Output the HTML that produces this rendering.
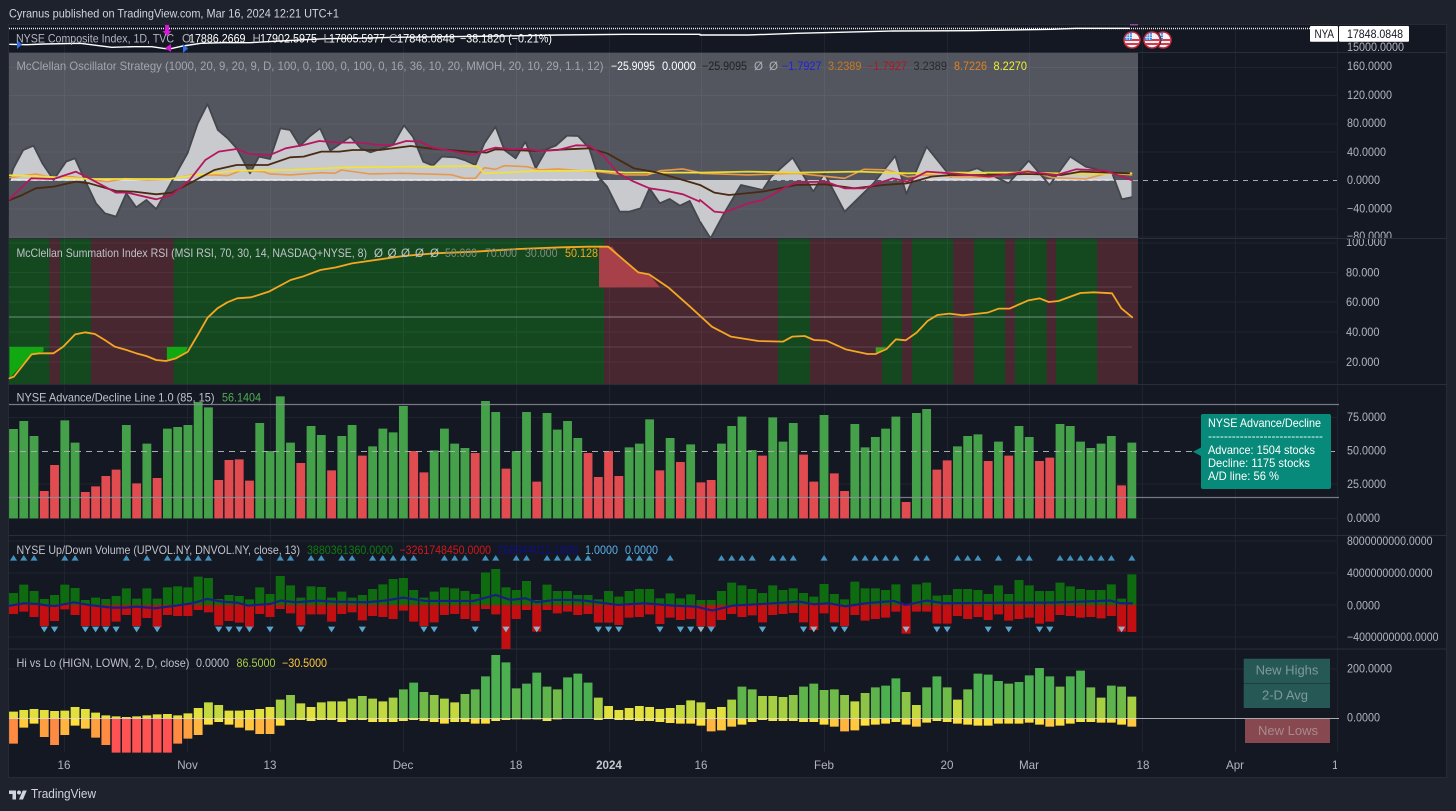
<!DOCTYPE html>
<html><head><meta charset="utf-8"><title>NYSE breadth chart</title>
<style>
html,body{margin:0;padding:0;background:#1e222d}
svg{display:block}
text{font-family:"Liberation Sans",sans-serif;font-size:11.6px;fill:#b2b5be}
.n{vector-effect:non-scaling-stroke;fill:none;stroke-linejoin:round;stroke-linecap:round}
.f{fill:none}
</style></head><body>
<svg width="1456" height="811" viewBox="0 0 1456 811" xmlns="http://www.w3.org/2000/svg">
<defs><clipPath id="fc"><circle r="7.3"/></clipPath>
<clipPath id="ax"><rect x="9" y="25" width="1328" height="753"/></clipPath>
<clipPath id="a1"><rect x="1340" y="53" width="106" height="185"/></clipPath>
<clipPath id="a2"><rect x="1340" y="239" width="106" height="145"/></clipPath>
<g id="flag"><circle r="9.4" fill="#131722"/><circle r="8.8" fill="#c22a3c"/><circle r="7.3" fill="#f4f4f6"/>
<g clip-path="url(#fc)"><rect x="-8" y="-1" width="16" height="2" fill="#d9384a"/><rect x="-8" y="3" width="16" height="2" fill="#d9384a"/><rect x="-8" y="-8" width="8" height="8" fill="#3f8fe8"/><path d="M-8-5H0M-8-2.5H0M-5-8V0M-2.5-8V0" stroke="#dfeeff" stroke-width=".7"/></g></g>
</defs>
<rect width="1456" height="811" fill="#1e222d"/>
<rect x="8.5" y="24.5" width="1438" height="753" fill="#141823" stroke="#262a35"/>
<!-- osc bg -->
<rect x="9" y="53" width="1129" height="185" fill="#53565f"/>
<!-- rsi bg -->
<rect x="9" y="239" width="1129" height="145" fill="#14491f"/>
<path fill="#482730" d="M49.4 239H60V384H49.4ZM91 239H173.6V384H91ZM604 239H778V384H604ZM810 239H882V384H810ZM902 239H912V384H902ZM953 239H974V384H953ZM1005 239H1015V384H1005ZM1046.5 239H1056V384H1046.5ZM1097 239H1138V384H1097Z"/>
<!-- grid -->
<path stroke="#ffffff" stroke-opacity=".05" fill="none" d="M64.5 25V752M187.5 25V752M270.5 25V752M403.5 25V752M516.5 25V752M609.5 25V752M701.5 25V752M824.5 25V752M947.5 25V752M1029.5 25V752M1142.5 25V752M1235.5 25V752M1337.5 25V752M9 67.5H1337M9 95.5H1337M9 124H1337M9 152H1337M9 209H1337M9 237H1337M9 243H1337M9 272.5H1337M9 302H1337M9 332H1337M9 362H1337M9 417.5H1337M9 484H1337M9 518.5H1337M9 541H1337M9 573H1337M9 605H1337M9 637H1337M9 669H1337"/>
<path stroke="#2a2e39" fill="none" d="M8 52.5H1447M8 238.5H1447M8 384.5H1447M8 535.5H1447M8 649H1447"/>
<!-- top price -->
<path d="M9 28.5H1310" stroke="#e8e8e8" stroke-width="1.4" stroke-dasharray="1 1" fill="none"/>
<g transform="scale(.4464,.3333)"><path class="n" stroke="#fff" stroke-width="1.4" d="M22 133 60 134 100 132 180 130 250 142 300 140 340 140 365 145 380 147 410 138 450 130 500 128 560 128 640 122 730 116 800 115 880 112 1000 110 1130 108 1250 105 1400 103 1568 103"/></g>
<g transform="translate(700,0) scale(.4821,.3333)"><path class="n" stroke="#fff" stroke-width="1.4" d="M0 105 100 105 200 100 400 93 560 92 730 88 780 85 890 85"/></g>
<path d="M165 25h4v6h2.500l-4.500 5-4.500-5h2.500zM165 48l6-4v8z" fill="#d916d9"/>
<path d="M17 40v9l5-4.500zM183 44v9l5-4.500z" fill="#2f6fe8"/>
<path d="M1130 24h8v1.500h-8z" fill="#8a4a9a"/>
<use href="#flag" x="1163" y="40"/><use href="#flag" x="1152" y="40"/><use href="#flag" x="1132" y="40"/>
<!-- osc -->
<path d="M9 180.500H1132" stroke="#b0b2b8" stroke-dasharray="4 4" fill="none"/>
<path d="M1133 180.500H1337" stroke="#a6a8ae" stroke-dasharray="5 5" fill="none"/>
<g transform="scale(.4464,.3333)">
<path fill="#c9cace" d="M22 540 30 505 52 450 75 437 95 490 120 540 148 485 168 475 190 540 215 610 235 640 260 650 283 580 305 622 328 600 350 627 372 575 395 520 420 460 443 370 465 312 488 390 510 415 530 445 560 520 580 470 605 477 628 385 650 390 672 438 693 410 717 385 740 452 785 410 808 445 830 457 880 435 905 376 925 410 948 485 970 497 990 470 1020 472 1040 480 1065 495 1085 430 1110 380 1130 450 1155 475 1177 425 1200 505 1225 447 1245 437 1270 407 1295 408 1320 445 1340 530 1360 560 1388 635 1410 635 1435 625 1455 565 1478 610 1500 597 1523 617 1545 603 1568 665V540Z"/>
<path class="n" stroke="#e6e6e8" stroke-width="1.600" d="M22 540H1340"/>
<path class="n" stroke="#44464e" stroke-width="1.800" d="M22 540 30 505 52 450 75 437 95 490 120 540 148 485 168 475 190 540 215 610 235 640 260 650 283 580 305 622 328 600 350 627 372 575 395 520 420 460 443 370 465 312 488 390 510 415 530 445 560 520 580 470 605 477 628 385 650 390 672 438 693 410 717 385 740 452 785 410 808 445 830 457 880 435 905 376 925 410 948 485 970 497 990 470 1020 472 1040 480 1065 495 1085 430 1110 380 1130 450 1155 475 1177 425 1200 505 1225 447 1245 437 1270 407 1295 408 1320 445 1340 530 1360 560 1388 635 1410 635 1435 625 1455 565 1478 610 1500 597 1523 617 1545 603 1568 665"/>
<path class="n" stroke="#e8984a" stroke-width="1.600" d="M22 533 80 522 120 533 160 530 200 538 240 545 280 536 330 540 380 538 430 525 480 525 510 527 540 512 590 515 605 522 650 525 720 518 750 520 765 510 830 522 900 520 1010 524 1040 535 1065 535 1085 503 1110 508 1130 497 1180 500 1210 510 1250 507 1300 512 1340 515 1400 525 1450 525 1480 512 1530 507 1568 518"/>
<path class="n" stroke="#f0e040" stroke-width="1.800" d="M22 526 100 530 200 537 300 537 380 537 430 527 530 512 650 510 780 502 950 500 1070 498 1085 520 1130 518 1200 513 1340 512 1400 518 1568 518"/>
<path class="n" stroke="#4a2a10" stroke-width="1.800" d="M22 600 50 585 80 565 120 560 170 545 200 550 260 573 300 575 350 583 385 578 425 550 480 510 530 495 600 495 650 472 680 470 720 455 760 455 790 450 850 450 920 438 960 445 1050 455 1090 458 1110 448 1200 453 1270 448 1320 445 1360 460 1420 505 1470 517 1530 540 1568 555"/>
<path class="n" stroke="#b5175f" stroke-width="1.800" d="M22 597 50 560 70 535 120 537 170 515 200 535 260 578 285 578 350 598 385 585 425 540 460 480 490 455 530 447 560 462 605 465 640 445 680 435 715 423 760 428 805 428 850 435 880 435 910 423 940 425 970 443 1000 450 1060 465 1090 450 1110 443 1150 448 1180 447 1210 453 1250 450 1290 436 1320 437 1350 465 1385 520 1420 545 1455 565 1490 572 1530 583 1568 605"/>
</g>
<g transform="translate(700,0) scale(.4821,.3333)">
<path fill="#c9cace" d="M0 540V665L22 715 50 640 85 555 130 570 148 530 192 473 235 575 258 520 300 635 360 550 405 468 428 582 470 440 520 530 575 505 640 550 682 482 725 555 768 470 800 500 855 520 875 598 895 592V540Z"/>
<path class="n" stroke="#e6e6e8" stroke-width="1.200" d="M470 540H860"/>
<path class="n" stroke="#44464e" stroke-width="1.800" d="M0 665 22 715 50 640 85 555 130 570 148 530 192 473 235 575 258 520 300 635 360 550 405 468 428 582 470 440 520 530 575 505 640 550 682 482 725 555 768 470 800 500 855 520 875 598 895 592"/>
<path class="n" stroke="#e8984a" stroke-width="1.600" d="M0 520 40 522 100 525 200 520 300 535 340 508 390 510 430 530 470 525 530 530 600 532 680 512 730 533 800 537 850 518 895 525"/>
<path class="n" stroke="#e8dc30" stroke-width="1.800" d="M0 518 100 515 200 518 330 515 430 520 530 518 680 518 800 522 895 520"/>
<path class="n" stroke="#4a2a10" stroke-width="1.800" d="M0 555 30 578 60 585 130 575 200 555 260 553 320 565 380 555 430 550 480 530 520 525 600 525 680 522 750 525 790 515 890 520"/>
<path class="n" stroke="#b5175f" stroke-width="1.800" d="M0 600 30 635 50 638 100 610 130 600 180 560 200 547 260 545 300 565 340 565 400 535 430 545 470 515 520 520 600 530 680 515 740 525 780 508 840 512 895 540"/>
</g>
<!-- rsi -->
<path d="M9 287H1132M9 347H1132" stroke="#fff" stroke-opacity=".13" fill="none"/>
<path d="M9 317H1132" stroke="#fff" stroke-opacity=".32" stroke-width="1.200" fill="none"/>
<g transform="translate(0,235) scale(.3954,.3333)">
<path fill="#12a812" d="M24 336H110V350L80 358 24 430ZM422 336H475L470 350 430 378H422Z"/>
<path fill="#a8404a" d="M1515 35H1548L1568 65V157H1515Z"/>
</g>
<g transform="translate(600,235) scale(.5459,.3333)">
<path fill="#a8404a" d="M0 35H15L70 110 90 118 110 157H0Z"/>
<path fill="#3ca01e" d="M505 337H525L505 355Z"/>
<path class="n" stroke="#f5a623" stroke-width="1.800" d="M0 35 15 35 70 112 90 118 125 157 165 215 205 275 240 305 290 318 335 320 352 305 375 303 392 315 415 317 450 343 490 357 505 357 525 342 542 313 560 316 580 293 600 258 618 240 640 236 665 241 710 233 730 221 750 221 785 196 805 190 822 201 840 198 880 174 905 172 938 175 955 220 975 247"/>
</g>
<g transform="translate(0,235) scale(.3954,.3333)">
<path class="n" stroke="#f5a623" stroke-width="1.800" d="M24 430 35 425 80 358 100 355 135 355 160 335 190 298 215 292 240 297 265 315 290 335 320 345 345 355 370 363 395 375 420 378 445 370 475 350 500 300 525 248 550 220 575 202 600 190 635 187 680 170 735 135 765 125 810 105 850 97 890 85 1020 63 1100 55 1200 50 1310 42 1420 37 1490 35 1518 35"/>
</g>
<!-- A/D -->
<g transform="translate(3.24,385) scale(10.26,.3333)" stroke-width=".86" class="f">
<path stroke="#45a04a" d="M1 400V132M2 400V108M3 400V153M6 400V106M7 400V173M12 400V120M14 400V176M16 400V131M17 400V126M18 400V120M19 400V51M20 400V67M25 400V114M26 400V198M27 400V34M28 400V173M30 400V123M31 400V150M33 400V153M34 400V120M36 400V184M37 400V131M38 400V142M39 400V63M42 400V196M43 400V131M44 400V176M45 400V189M47 400V48M48 400V81M50 400V198M51 400V81M53 400V84M54 400V134M55 400V108M56 400V159M61 400V187M62 400V176M63 400V103M65 400V159M67 400V178M70 400V176M71 400V123M72 400V95M73 400V195M75 400V97M76 400V170M77 400V114M80 400V90M83 400V117M84 400V187M85 400V156M86 400V131M87 400V95M89 400V84M90 400V72M93 400V184M94 400V153M95 400V148M97 400V170M99 400V123M100 400V156M103 400V117M104 400V123M105 400V170M106 400V189M107 400V176M108 400V153M110 400V173"/>
<path stroke="#e04c50" d="M4 400V318M5 400V240M8 400V321M9 400V304M10 400V273M11 400V254M13 400V295M15 400V279M21 400V285M22 400V225M23 400V223M24 400V287M29 400V234M32 400V256M35 400V212M40 400V198M41 400V262M46 400V204M49 400V251M52 400V290M57 400V204M58 400V276M59 400V198M60 400V273M64 400V256M66 400V231M68 400V292M69 400V285M74 400V212M78 400V209M79 400V290M81 400V265M82 400V318M88 400V351M91 400V254M92 400V226M96 400V228M98 400V212M101 400V228M102 400V218M109 400V301"/>
</g>
<path d="M9 404.500H1339M9 497.500H1339" stroke="#8f9299" stroke-width="1.300" fill="none" stroke-opacity=".8"/>
<path d="M9 451.500H1337" stroke="#a8aab0" stroke-dasharray="6 5" fill="none"/>
<!-- volume -->
<g transform="translate(3.24,535) scale(10.26,.3333)" stroke-width=".88" class="f">
<path stroke="#0f6b0f" d="M1 210V174M2 210V149M3 210V168M4 210V192M5 210V180M6 210V149M7 210V159M8 210V195M9 210V188M10 210V192M11 210V183M12 210V160M13 210V191M14 210V160M15 210V191M16 210V157M17 210V154M18 210V157M19 210V125M20 210V129M21 210V192M22 210V180M23 210V183M24 210V193M25 210V157M26 210V177M27 210V123M28 210V151M29 210V188M30 210V154M31 210V156M32 210V188M33 210V170M34 210V188M35 210V180M36 210V162M37 210V148M38 210V132M39 210V129M40 210V165M41 210V188M42 210V170M43 210V157M44 210V160M45 210V168M46 210V177M47 210V112M48 210V102M49 210V157M50 210V165M51 210V138M52 210V195M53 210V149M54 210V168M55 210V168M56 210V180M57 210V180M58 210V193M59 210V168M60 210V185M61 210V168M62 210V162M63 210V162M64 210V190M65 210V175M66 210V190M67 210V178M68 210V195M69 210V195M70 210V168M71 210V143M72 210V151M73 210V162M74 210V174M75 210V151M76 210V165M77 210V160M78 210V174M79 210V185M80 210V147M81 210V177M82 210V193M83 210V140M84 210V160M85 210V160M86 210V165M87 210V148M88 210V208M89 210V148M90 210V143M91 210V182M92 210V180M93 210V162M94 210V162M95 210V165M96 210V177M97 210V151M98 210V177M99 210V135M100 210V151M101 210V168M102 210V168M103 210V143M104 210V154M105 210V162M106 210V165M107 210V165M108 210V148M109 210V191M110 210V118"/>
<path stroke="#c40f12" d="M1 210V237M2 210V230M3 210V246M4 210V273M5 210V258M6 210V223M7 210V240M8 210V273M9 210V273M10 210V273M11 210V260M12 210V240M13 210V273M14 210V249M15 210V276M16 210V240M17 210V243M18 210V243M19 210V225M20 210V232M21 210V271M22 210V258M23 210V263M24 210V276M25 210V237M26 210V246M27 210V222M28 210V235M29 210V271M30 210V238M31 210V238M32 210V260M33 210V237M34 210V232M35 210V256M36 210V243M37 210V246M38 210V252M39 210V227M40 210V260M41 210V273M42 210V262M43 210V240M44 210V237M45 210V252M46 210V258M47 210V222M48 210V238M49 210V342M50 210V252M51 210V225M52 210V290M53 210V225M54 210V235M55 210V230M56 210V240M57 210V237M58 210V263M59 210V263M60 210V270M61 210V248M62 210V246M63 210V238M64 210V267M65 210V248M66 210V255M67 210V252M68 210V273M69 210V276M70 210V255M71 210V237M72 210V246M73 210V241M74 210V262M75 210V240M76 210V237M77 210V234M78 210V262M79 210V285M80 210V235M81 210V262M82 210V273M83 210V240M84 210V257M85 210V252M86 210V248M87 210V230M88 210V296M89 210V230M90 210V230M91 210V266M92 210V266M93 210V243M94 210V252M95 210V246M96 210V255M97 210V238M98 210V257M99 210V252M100 210V248M101 210V266M102 210V260M103 210V240M104 210V243M105 210V248M106 210V246M107 210V250M108 210V243M109 210V290M110 210V291"/>
</g>
<g transform="scale(.3699,.3333) translate(0,1605)"><path class="n" stroke="#1a1f7e" stroke-width="2.200" d="M24 213 64 205 100 207 130 212 150 213 200 202 240 210 300 218 340 218 370 215 420 220 470 213 520 205 560 192 600 200 640 203 670 212 730 207 760 197 800 202 860 197 900 200 990 202 1040 197 1090 188 1150 198 1280 198 1340 180 1380 195 1420 190 1450 202 1500 195 1568 195"/></g>
<g transform="translate(570,0) scale(.3699,.3333) translate(0,1605)"><path class="n" stroke="#1a1f7e" stroke-width="2.200" d="M0 195 40 197 130 210 200 205 280 212 340 215 385 227 440 212 520 207 620 200 660 208 700 205 745 214 800 205 875 198 907 210 965 197 1010 205 1200 203 1300 203 1460 197 1490 205 1519 205"/></g>
<g transform="translate(-.35,535) scale(10.26,.3333)">
<path fill="#4390bd" d="M1 77h.7l-.35-17zM2 77h.7l-.35-17zM3 77h.7l-.35-17zM6 77h.7l-.35-17zM7 77h.7l-.35-17zM12 77h.7l-.35-17zM14 77h.7l-.35-17zM16 77h.7l-.35-17zM17 77h.7l-.35-17zM18 77h.7l-.35-17zM19 77h.7l-.35-17zM20 77h.7l-.35-17zM25 77h.7l-.35-17zM27 77h.7l-.35-17zM28 77h.7l-.35-17zM30 77h.7l-.35-17zM31 77h.7l-.35-17zM33 77h.7l-.35-17zM34 77h.7l-.35-17zM36 77h.7l-.35-17zM37 77h.7l-.35-17zM38 77h.7l-.35-17zM39 77h.7l-.35-17zM40 77h.7l-.35-17zM43 77h.7l-.35-17zM44 77h.7l-.35-17zM45 77h.7l-.35-17zM47 77h.7l-.35-17zM48 77h.7l-.35-17zM50 77h.7l-.35-17zM51 77h.7l-.35-17zM53 77h.7l-.35-17zM54 77h.7l-.35-17zM55 77h.7l-.35-17zM56 77h.7l-.35-17zM57 77h.7l-.35-17zM61 77h.7l-.35-17zM62 77h.7l-.35-17zM63 77h.7l-.35-17zM65 77h.7l-.35-17zM70 77h.7l-.35-17zM71 77h.7l-.35-17zM72 77h.7l-.35-17zM73 77h.7l-.35-17zM75 77h.7l-.35-17zM76 77h.7l-.35-17zM77 77h.7l-.35-17zM80 77h.7l-.35-17zM83 77h.7l-.35-17zM84 77h.7l-.35-17zM85 77h.7l-.35-17zM86 77h.7l-.35-17zM87 77h.7l-.35-17zM89 77h.7l-.35-17zM90 77h.7l-.35-17zM93 77h.7l-.35-17zM94 77h.7l-.35-17zM95 77h.7l-.35-17zM97 77h.7l-.35-17zM99 77h.7l-.35-17zM100 77h.7l-.35-17zM103 77h.7l-.35-17zM104 77h.7l-.35-17zM105 77h.7l-.35-17zM106 77h.7l-.35-17zM107 77h.7l-.35-17zM108 77h.7l-.35-17zM110 77h.7l-.35-17z"/>
<path fill="#58a5cc" d="M4 275h.7l-.35 17zM5 275h.7l-.35 17zM8 275h.7l-.35 17zM9 275h.7l-.35 17zM10 275h.7l-.35 17zM11 275h.7l-.35 17zM13 275h.7l-.35 17zM15 275h.7l-.35 17zM21 275h.7l-.35 17zM22 275h.7l-.35 17zM23 275h.7l-.35 17zM24 275h.7l-.35 17zM26 275h.7l-.35 17zM29 275h.7l-.35 17zM32 275h.7l-.35 17zM35 275h.7l-.35 17zM41 275h.7l-.35 17zM42 275h.7l-.35 17zM46 275h.7l-.35 17zM58 275h.7l-.35 17zM59 275h.7l-.35 17zM60 275h.7l-.35 17zM64 275h.7l-.35 17zM66 275h.7l-.35 17zM67 275h.7l-.35 17zM69 275h.7l-.35 17zM74 275h.7l-.35 17zM78 275h.7l-.35 17zM81 275h.7l-.35 17zM82 275h.7l-.35 17zM91 275h.7l-.35 17zM92 275h.7l-.35 17zM96 275h.7l-.35 17zM98 275h.7l-.35 17zM101 275h.7l-.35 17zM102 275h.7l-.35 17z"/>
<path fill="#9ab0c2" d="M49 275h.7l-.35 17zM52 275h.7l-.35 17zM68 275h.7l-.35 17zM79 275h.7l-.35 17zM88 275h.7l-.35 17zM109 275h.7l-.35 17z"/>
</g>
<!-- hi lo -->
<g transform="translate(3.24,650) scale(10.26,.3333)" stroke-width=".86" class="f">
<path stroke="#4caf50" d="M40 205V98M47 205V79M48 205V15M49 205V37M51 205V101M52 205V68M55 205V82M56 205V71M57 205V98M86 205V107M87 205V85M91 205V79M95 205V71M96 205V74M97 205V93M99 205V96M100 205V76M101 205V54M102 205V79M104 205V79M105 205V62"/>
<path stroke="#5fb34b" d="M39 205V118M46 205V118M50 205V115M53 205V110M72 205V110M78 205V110M79 205V101M85 205V112M90 205V112M98 205V101M108 205V107"/>
<path stroke="#6fba48" d="M41 205V126M45 205V132M54 205V118M73 205V118M80 205V120M81 205V118M92 205V112M94 205V118M103 205V110M106 205V112M109 205V110"/>
<path stroke="#8bc446" d="M28 205V135M35 205V138M42 205V135M77 205V135M82 205V135M84 205V129M88 205V126"/>
<path stroke="#a6cf42" d="M27 205V149M34 205V146M36 205V146M38 205V143M43 205V146M58 205V143M71 205V149M74 205V138M75 205V138M76 205V141M107 205V143M110 205V140"/>
<path stroke="#c3d93f" d="M20 205V157M21 205V165M29 205V160M31 205V157M32 205V154M33 205V154M37 205V154M44 205V157M66 205V165M67 205V151M68 205V157M83 205V154M89 205V165M93 205V149"/>
<path stroke="#e2e03f" d="M1 205V185M2 205V180M3 205V177M4 205V180M5 205V183M6 205V182M7 205V171M8 205V177M9 205V188M10 205V196M11 205V199M12 205V201M13 205V199M14 205V196M15 205V193M16 205V192M17 205V196M18 205V190M19 205V174M22 205V182M23 205V182M24 205V180M25 205V177M26 205V171M30 205V171M59 205V168M60 205V180M61 205V174M62 205V168M63 205V171M64 205V177M65 205V174M69 205V177M70 205V171"/>
<path stroke="#f3e63f" d="M21 205V216M28 205V210M29 205V210M30 205V213M31 205V210M32 205V210M33 205V216M34 205V210M35 205V210M36 205V216M37 205V216M38 205V216M39 205V213M40 205V210M41 205V213M42 205V216M44 205V216M45 205V216M48 205V213M49 205V210M50 205V208M51 205V208M52 205V208M53 205V213M54 205V208M58 205V210M59 205V207M60 205V210M61 205V210M62 205V213M63 205V213M64 205V216M73 205V216M74 205V210M75 205V213M76 205V213M77 205V213M78 205V216M79 205V216M87 205V216M91 205V213M92 205V216M105 205V216M106 205V216"/>
<path stroke="#ffdf3d" d="M3 205V221M7 205V227M20 205V224M22 205V224M27 205V227M43 205V221M46 205V221M47 205V221M65 205V219M66 205V221M67 205V221M68 205V227M72 205V224M80 205V224M84 205V227M85 205V224M86 205V221M88 205V224M90 205V218M93 205V221M94 205V224M95 205V227M96 205V227M97 205V221M98 205V221M99 205V221M100 205V218M101 205V224M103 205V227M104 205V221M107 205V218M108 205V218M109 205V224"/>
<path stroke="#ffc83e" d="M2 205V233M8 205V236M23 205V233M24 205V241M70 205V241M71 205V230M81 205V230M83 205V241M89 205V230M102 205V230M110 205V230"/>
<path stroke="#ffb53f" d="M6 205V255M19 205V255M25 205V252M26 205V252M69 205V244M82 205V244"/>
<path stroke="#ffa040" d="M4 205V261M9 205V263M18 205V266"/>
<path stroke="#ff8a42" d="M1 205V281M5 205V285M10 205V285M17 205V281"/>
<path stroke="#ff5252" d="M11 205V308M12 205V308M13 205V308M14 205V308M15 205V308M16 205V308"/>
</g>
<path d="M9 718.500H1339" stroke="#e8e8e8" stroke-opacity=".7" fill="none"/>
<!-- labels on right -->
<path d="M1203 414H1329a2 2 0 0 1 2 2V487a2 2 0 0 1-2 2H1203a2 2 0 0 1-2-2V456L1193 451.700 1201 447.500V416a2 2 0 0 1 2-2Z" fill="#078a7a"/>
<text x="1208" y="427" textLength="113" lengthAdjust="spacingAndGlyphs" style="fill:#fff">NYSE Advance/Decline</text>
<text x="1208" y="440" textLength="115" lengthAdjust="spacingAndGlyphs" style="fill:#e8fffa">-----------------------------</text>
<text x="1208" y="454" textLength="107" lengthAdjust="spacingAndGlyphs" style="fill:#fff">Advance: 1504 stocks</text>
<text x="1208" y="467" textLength="102" lengthAdjust="spacingAndGlyphs" style="fill:#fff">Decline: 1175 stocks</text>
<text x="1208" y="480" textLength="71" lengthAdjust="spacingAndGlyphs" style="fill:#fff">A/D line: 56 %</text>
<rect x="1243.700" y="658.700" width="86.300" height="24.500" fill="#265855"/>
<rect x="1243.700" y="683.600" width="86.300" height="24.400" fill="#265855"/>
<rect x="1245" y="719" width="85" height="24" fill="#884850"/>
<text x="1287" y="674.500" text-anchor="middle" style="font-size:13px;fill:#7f9a9a">New Highs</text>
<text x="1285" y="699.500" text-anchor="middle" style="font-size:13px;fill:#7f9a9a">2-D Avg</text>
<text x="1288" y="735" text-anchor="middle" style="font-size:13px;fill:#a88a8e">New Lows</text>
<!-- axis labels -->
<g>
<text x="1347" y="51" textLength="57" lengthAdjust="spacingAndGlyphs">15000.0000</text>
<text x="1347" y="70" textLength="45" lengthAdjust="spacingAndGlyphs">160.0000</text>
<text x="1347" y="99" textLength="45" lengthAdjust="spacingAndGlyphs">120.0000</text>
<text x="1347" y="127" textLength="39" lengthAdjust="spacingAndGlyphs">80.0000</text>
<text x="1347" y="156" textLength="39" lengthAdjust="spacingAndGlyphs">40.0000</text>
<text x="1347" y="184" textLength="33" lengthAdjust="spacingAndGlyphs">0.0000</text>
<text x="1347" y="212.500" textLength="45" lengthAdjust="spacingAndGlyphs">−40.0000</text>
<g clip-path="url(#a1)"><text x="1347" y="240" textLength="45" lengthAdjust="spacingAndGlyphs">−80.0000</text></g>
<g clip-path="url(#a2)"><text x="1346" y="246" textLength="40" lengthAdjust="spacingAndGlyphs">100.000</text></g>
<text x="1346" y="276.500" textLength="33.500" lengthAdjust="spacingAndGlyphs">80.000</text>
<text x="1346" y="306" textLength="33.500" lengthAdjust="spacingAndGlyphs">60.000</text>
<text x="1346" y="336" textLength="33.500" lengthAdjust="spacingAndGlyphs">40.000</text>
<text x="1346" y="366" textLength="33.500" lengthAdjust="spacingAndGlyphs">20.000</text>
<text x="1347" y="421" textLength="39" lengthAdjust="spacingAndGlyphs">75.0000</text>
<text x="1347" y="454.500" textLength="39" lengthAdjust="spacingAndGlyphs">50.0000</text>
<text x="1347" y="488" textLength="39" lengthAdjust="spacingAndGlyphs">25.0000</text>
<text x="1347" y="522" textLength="33" lengthAdjust="spacingAndGlyphs">0.0000</text>
<text x="1347" y="545" textLength="85.500" lengthAdjust="spacingAndGlyphs">8000000000.0000</text>
<text x="1347" y="577" textLength="85.500" lengthAdjust="spacingAndGlyphs">4000000000.0000</text>
<text x="1347" y="609.500" textLength="33" lengthAdjust="spacingAndGlyphs">0.0000</text>
<text x="1347" y="641" textLength="91.500" lengthAdjust="spacingAndGlyphs">−4000000000.0000</text>
<text x="1347" y="672.500" textLength="45" lengthAdjust="spacingAndGlyphs">200.0000</text>
<text x="1347" y="721.500" textLength="33" lengthAdjust="spacingAndGlyphs">0.0000</text>
</g>
<rect x="1310" y="26" width="28" height="15.700" rx="1" fill="#fff"/>
<rect x="1339" y="26" width="70" height="15.700" rx="1" fill="#fff"/>
<text x="1314.500" y="38" textLength="19.500" lengthAdjust="spacingAndGlyphs" style="fill:#131722">NYA</text>
<text x="1347" y="38" textLength="56" lengthAdjust="spacingAndGlyphs" style="fill:#131722">17848.0848</text>
<!-- time axis -->
<g text-anchor="middle">
<text x="64" y="769">16</text><text x="187.500" y="769">Nov</text><text x="270" y="769">13</text><text x="403" y="769">Dec</text><text x="516" y="769">18</text><text x="609" y="769" style="font-weight:bold;fill:#c4c7ce">2024</text><text x="701" y="769">16</text><text x="824" y="769">Feb</text><text x="947" y="769">20</text><text x="1029" y="769">Mar</text><text x="1143" y="769">18</text><text x="1235" y="769">Apr</text>
</g>
<g clip-path="url(#ax)"><text x="1332" y="769">15</text></g>
<!-- legends -->
<text x="9" y="17.500" textLength="330" lengthAdjust="spacingAndGlyphs" style="font-size:12px;fill:#d1d4dc">Cyranus published on TradingView.com, Mar 16, 2024 12:21 UTC+1</text>
<text x="16" y="42.500" textLength="158" lengthAdjust="spacingAndGlyphs">NYSE Composite Index, 1D, TVC</text>
<text x="182" y="42.500">O</text><text x="189" y="42.500" textLength="56.500" lengthAdjust="spacingAndGlyphs" style="fill:#fff">17886.2669</text>
<text x="252.500" y="42.500">H</text><text x="260" y="42.500" textLength="57" lengthAdjust="spacingAndGlyphs" style="fill:#fff">17902.5975</text>
<text x="323.500" y="42.500">L</text><text x="329" y="42.500" textLength="56" lengthAdjust="spacingAndGlyphs" style="fill:#fff">17805.5977</text>
<text x="389" y="42.500">C</text><text x="397" y="42.500" textLength="58" lengthAdjust="spacingAndGlyphs" style="fill:#fff">17848.0848</text>
<text x="460" y="42.500" textLength="92" lengthAdjust="spacingAndGlyphs" style="fill:#fff">−38.1820 (−0.21%)</text>

<text x="16.500" y="70" textLength="587" lengthAdjust="spacingAndGlyphs" style="fill:#a3a5ab">McClellan Oscillator Strategy (1000, 20, 9, 20, 9, D, 100, 0, 100, 0, 100, 0, 16, 36, 10, 20, MMOH, 20, 10, 29, 1.1, 12)</text>
<text x="611" y="70" textLength="44" lengthAdjust="spacingAndGlyphs" style="fill:#fff">−25.9095</text>
<text x="662" y="70" textLength="34" lengthAdjust="spacingAndGlyphs" style="fill:#fff">0.0000</text>
<text x="702" y="70" textLength="45" lengthAdjust="spacingAndGlyphs" style="fill:#222">−25.9095</text>
<text x="754" y="70" style="fill:#b0b0b4">Ø</text><text x="769" y="70" style="fill:#b0b0b4">Ø</text>
<text x="782" y="70" textLength="39.500" lengthAdjust="spacingAndGlyphs" style="fill:#2020e0">−1.7927</text>
<text x="828" y="70" textLength="33.500" lengthAdjust="spacingAndGlyphs" style="fill:#c87820">3.2389</text>
<text x="867" y="70" textLength="40" lengthAdjust="spacingAndGlyphs" style="fill:#b01820">−1.7927</text>
<text x="913.500" y="70" textLength="33.500" lengthAdjust="spacingAndGlyphs" style="fill:#2a2a2a">3.2389</text>
<text x="954" y="70" textLength="33" lengthAdjust="spacingAndGlyphs" style="fill:#e08020">8.7226</text>
<text x="993.500" y="70" textLength="33.500" lengthAdjust="spacingAndGlyphs" style="fill:#f0f030">8.2270</text>

<text x="16.500" y="257" textLength="350.500" lengthAdjust="spacingAndGlyphs" style="fill:#c0c3c9">McClellan Summation Index RSI (MSI RSI, 70, 30, 14, NASDAQ+NYSE, 8)</text>
<text x="374" y="257" style="fill:#c0c3c9">Ø</text><text x="387.500" y="257" style="fill:#c0c3c9">Ø</text><text x="401" y="257" style="fill:#c0c3c9">Ø</text><text x="415" y="257" style="fill:#c0c3c9">Ø</text><text x="430" y="257" style="fill:#c0c3c9">Ø</text>
<text x="445" y="257" textLength="32" lengthAdjust="spacingAndGlyphs" style="fill:#7f8a80">50.000</text>
<text x="485" y="257" textLength="32" lengthAdjust="spacingAndGlyphs" style="fill:#7f8a80">70.000</text>
<text x="525" y="257" textLength="32.500" lengthAdjust="spacingAndGlyphs" style="fill:#7f8a80">30.000</text>
<text x="565" y="257" textLength="33" lengthAdjust="spacingAndGlyphs" style="fill:#f5a623">50.128</text>

<text x="16.500" y="401.500" textLength="198" lengthAdjust="spacingAndGlyphs" style="fill:#c0c3c9">NYSE Advance/Decline Line 1.0 (85, 15)</text>
<text x="222" y="401.500" textLength="39" lengthAdjust="spacingAndGlyphs" style="fill:#4caf50">56.1404</text>

<text x="16.500" y="554" textLength="283.500" lengthAdjust="spacingAndGlyphs" style="fill:#c0c3c9">NYSE Up/Down Volume (UPVOL.NY, DNVOL.NY, close, 13)</text>
<text x="307" y="554" textLength="86" lengthAdjust="spacingAndGlyphs" style="fill:#0f7a0f">3880361360.0000</text>
<text x="399.500" y="554" textLength="91.500" lengthAdjust="spacingAndGlyphs" style="fill:#d01818">−3261748450.0000</text>
<text x="497.500" y="554" textLength="80.500" lengthAdjust="spacingAndGlyphs" style="fill:#101080">268844011.1889</text>
<text x="585" y="554" textLength="33" lengthAdjust="spacingAndGlyphs" style="fill:#5ab0e8">1.0000</text>
<text x="625" y="554" textLength="33" lengthAdjust="spacingAndGlyphs" style="fill:#5ab0e8">0.0000</text>

<text x="16.500" y="667" textLength="172.900" lengthAdjust="spacingAndGlyphs" style="fill:#c0c3c9">Hi vs Lo (HIGN, LOWN, 2, D, close)</text>
<text x="196" y="667" textLength="33" lengthAdjust="spacingAndGlyphs" style="fill:#c0c3c9">0.0000</text>
<text x="236.500" y="667" textLength="39" lengthAdjust="spacingAndGlyphs" style="fill:#a8cc44">86.5000</text>
<text x="282" y="667" textLength="45" lengthAdjust="spacingAndGlyphs" style="fill:#ffc93c">−30.5000</text>
<!-- logo -->
<g transform="translate(9,788.500) scale(.5)" fill="#d1d4dc"><path d="M14 22H7V11H0V4h14v18zM28 22h-8l7.500-18h8L28 22z"/><circle cx="20" cy="8" r="4"/></g>
<text x="31" y="798" textLength="65" lengthAdjust="spacingAndGlyphs" style="font-size:13px;fill:#d1d4dc">TradingView</text>
</svg>
</body></html>
